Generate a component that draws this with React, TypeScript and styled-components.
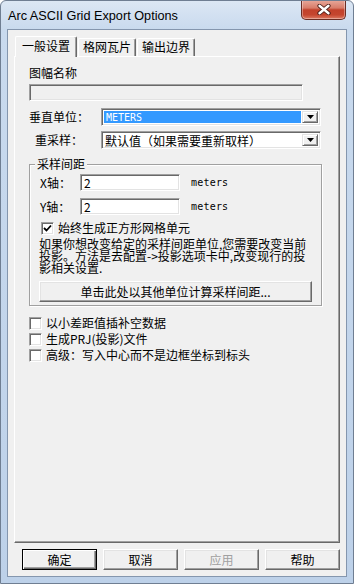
import React from 'react';
import styled, { createGlobalStyle } from 'styled-components';

const GlobalStyle = createGlobalStyle`
  html, body { margin: 0; padding: 0; background: #ffffff; }
  body { font-family: "Noto Sans CJK SC", "Liberation Sans", sans-serif; font-size: 12px; color: #000; }
  * { box-sizing: border-box; }
`;

const CJK = `"Noto Sans CJK SC", "Liberation Sans", sans-serif`;
const MONO = `"DejaVu Sans Mono", "Liberation Mono", monospace`;

const Window = styled.div`
  width: 354px;
  height: 584px;
  display: flex;
  flex-direction: column;
  border: 1px solid #6f7e92;
  border-radius: 6px 6px 0 0;
  background: linear-gradient(180deg, #dce7f4 0px, #c9daee 28px, #bdd1e9 100%);
  padding: 0 6px 6px;
  overflow: hidden;
`;

const TitleBar = styled.div`
  height: 28px;
  flex: none;
  display: flex;
  align-items: center;
  justify-content: space-between;
  padding-left: 1px;
`;

const Title = styled.div`
  font-family: "Liberation Sans", sans-serif;
  font-size: 12.7px;
  color: #000;
  margin-top: 1px;
`;

const CloseButton = styled.div`
  align-self: flex-start;
  margin-top: -1px;
  margin-right: 1px;
  width: 45px;
  height: 20px;
  display: flex;
  align-items: center;
  justify-content: center;
  border: 1px solid #6a2d24;
  border-top: none;
  border-radius: 0 0 5px 5px;
  background: linear-gradient(180deg, #e9aa9c 0%, #d87c69 42%, #c2412b 52%, #c5462f 78%, #dc7a63 100%);
  box-shadow: inset 0 0 0 1px rgba(255, 255, 255, 0.35);
`;

const Client = styled.div`
  flex: 1;
  display: flex;
  flex-direction: column;
  background: #f0f0f0;
  border: 1px solid #8496ae;
  padding: 6px 6px 6px 6px;
`;

const TabStrip = styled.div`
  height: 20px;
  flex: none;
  display: flex;
  align-items: flex-end;
  gap: 1px;
  padding-left: 1px;
  position: relative;
  z-index: 1;
`;

const Tab = styled.div<{ $active?: boolean }>`
  height: ${(p) => (p.$active ? 21 : 18)}px;
  margin-bottom: ${(p) => (p.$active ? -1 : 0)}px;
  padding: ${(p) => (p.$active ? '0 6px' : '0 4px')};
  line-height: ${(p) => (p.$active ? 18 : 16)}px;
  font-family: ${CJK};
  font-size: 12px;
  background: #f0f0f0;
  border-left: 1px solid #ffffff;
  border-top: 1px solid #ffffff;
  border-right: 1px solid #696969;
  box-shadow: inset -1px 0 0 #a0a0a0;
  border-radius: 2px 2px 0 0;
  white-space: nowrap;
`;

const Panel = styled.div`
  flex: 1;
  display: flex;
  flex-direction: column;
  border-top: 1px solid #ffffff;
  border-left: 1px solid #ffffff;
  border-right: 1px solid #696969;
  border-bottom: 1px solid #696969;
  box-shadow: inset -1px -1px 0 #a0a0a0;
  padding: 0 0 0 14px;
`;

const FieldLabel = styled.div`
  margin-top: 9px;
  height: 14px;
  line-height: 14px;
  font-family: ${CJK};
`;

const TextBox = styled.div<{ $w: number; $disabled?: boolean; $mt?: number }>`
  width: ${(p) => p.$w}px;
  height: 17px;
  margin-top: ${(p) => p.$mt ?? 0}px;
  flex: none;
  background: ${(p) => (p.$disabled ? '#f0f0f0' : '#ffffff')};
  border: 1px solid;
  border-color: #a0a0a0 #ffffff #ffffff #a0a0a0;
  box-shadow: inset 1px 1px 0 #696969, inset -1px -1px 0 #e3e3e3;
  padding: 0 3px;
  line-height: 15px;
  font-family: ${CJK};
  font-size: 12px;
`;

const ComboRow = styled.div<{ $mt: number }>`
  margin-top: ${(p) => p.$mt}px;
  display: flex;
  align-items: center;
  height: 18px;
`;

const RowLabel = styled.div<{ $w: number; $indent?: number }>`
  width: ${(p) => p.$w}px;
  padding-left: ${(p) => p.$indent ?? 0}px;
  flex: none;
  font-family: ${CJK};
  line-height: 14px;
  white-space: nowrap;
`;

const Combo = styled.div`
  width: 220px;
  height: 18px;
  display: flex;
  background: #ffffff;
  border: 1px solid;
  border-color: #a0a0a0 #ffffff #ffffff #a0a0a0;
  box-shadow: inset 1px 1px 0 #696969, inset -1px -1px 0 #e3e3e3;
  padding: 2px;
`;

const ComboValue = styled.div<{ $selected?: boolean; $mono?: boolean }>`
  flex: 1;
  margin-right: 1px;
  padding-left: ${(p) => (p.$selected ? 2 : 1)}px;
  background: ${(p) => (p.$selected ? '#3399ff' : 'transparent')};
  color: ${(p) => (p.$selected ? '#ffffff' : '#000000')};
  font-family: ${(p) => (p.$mono ? MONO : CJK)};
  font-size: ${(p) => (p.$mono ? 10 : 12)}px;
  line-height: 14px;
  white-space: nowrap;
`;

const DropButton = styled.div`
  width: 16px;
  flex: none;
  display: flex;
  align-items: center;
  justify-content: center;
  background: #f0f0f0;
  border: 1px solid;
  border-color: #e3e3e3 #696969 #696969 #e3e3e3;
  box-shadow: inset 1px 1px 0 #ffffff, inset -1px -1px 0 #a0a0a0;
`;

const Group = styled.fieldset`
  margin: 8px 0 0 0;
  width: 293px;
  padding: 0;
  border: 1px solid #a0a0a0;
  box-shadow: 1px 1px 0 #ffffff, inset 1px 1px 0 #ffffff;
  min-inline-size: 0;
`;

const Legend = styled.legend`
  margin-left: 5px;
  padding: 0 2px;
  line-height: 14px;
  height: 14px;
  font-family: ${CJK};
  background: #f0f0f0;
`;

const GroupBody = styled.div`
  display: flex;
  flex-direction: column;
  padding: 0 9px 3px 10px;
`;

const SpacingRow = styled.div<{ $mt: number }>`
  margin-top: ${(p) => p.$mt}px;
  display: flex;
  align-items: center;
  height: 17px;
`;

const Unit = styled.div`
  margin-left: 11px;
  font-family: ${MONO};
  font-size: 10px;
  letter-spacing: 0.2px;
  line-height: 14px;
`;

const CheckRow = styled.div<{ $mt?: number; $h: number; $ml?: number }>`
  margin-top: ${(p) => p.$mt ?? 0}px;
  margin-left: ${(p) => p.$ml ?? 0}px;
  height: ${(p) => p.$h}px;
  display: flex;
  align-items: center;
  gap: 4px;
  font-family: ${CJK};
  line-height: 14px;
  white-space: nowrap;
`;

const CheckBox = styled.div`
  width: 13px;
  height: 13px;
  flex: none;
  background: #ffffff;
  border: 1px solid;
  border-color: #a0a0a0 #ffffff #ffffff #a0a0a0;
  box-shadow: inset 1px 1px 0 #696969, inset -1px -1px 0 #e3e3e3;
  display: flex;
  align-items: center;
  justify-content: center;
`;

const Note = styled.div`
  margin-top: 3px;
  margin-left: -1px;
  font-family: ${CJK};
  font-size: 12px;
  line-height: 12px;
`;

const NoteLine = styled.div`
  white-space: nowrap;
  height: 12px;
`;

const PushButton = styled.div<{ $w: number; $default?: boolean; $disabled?: boolean }>`
  width: ${(p) => p.$w}px;
  height: 21px;
  flex: none;
  display: flex;
  align-items: center;
  justify-content: center;
  font-family: ${CJK};
  font-size: 12px;
  line-height: 14px;
  color: ${(p) => (p.$disabled ? '#a0a0a0' : '#000000')};
  background: #f0f0f0;
  border: 1px solid;
  border-color: ${(p) => (p.$default ? '#000000' : '#ffffff #696969 #696969 #ffffff')};
  box-shadow: ${(p) =>
    p.$default
      ? 'inset 1px 1px 0 #ffffff, inset -1px -1px 0 #696969, inset -2px -2px 0 #a0a0a0'
      : 'inset -1px -1px 0 #a0a0a0, inset 1px 1px 0 #e3e3e3'};
  white-space: nowrap;
`;

const WideButton = styled(PushButton)`
  margin-top: 7px;
  margin-left: -1px;
`;

const Options = styled.div`
  margin-top: 9px;
  display: flex;
  flex-direction: column;
`;

const ButtonRow = styled.div`
  margin-top: 6px;
  flex: none;
  display: flex;
  justify-content: flex-end;
  gap: 6px;
`;

const Arrow = () => (
  <svg width="7" height="4" viewBox="0 0 7 4">
    <polygon points="0,0 7,0 3.5,4" fill="#000" />
  </svg>
);

const Check = () => (
  <svg width="9" height="9" viewBox="0 0 9 9">
    <polyline points="1,4 3.5,6.5 8,1.5" fill="none" stroke="#000" strokeWidth="1.8" />
  </svg>
);

const CloseGlyph = () => (
  <svg width="14" height="11" viewBox="0 0 14 11">
    <path d="M2.5 1.8 L11.5 9.2 M11.5 1.8 L2.5 9.2" stroke="#4a1c16" strokeWidth="4.2" strokeLinecap="round" />
    <path d="M2.5 1.8 L11.5 9.2 M11.5 1.8 L2.5 9.2" stroke="#ffffff" strokeWidth="2.4" strokeLinecap="round" />
  </svg>
);

export default function App() {
  return (
    <>
      <GlobalStyle />
      <Window>
        <TitleBar>
          <Title>Arc ASCII Grid Export Options</Title>
          <CloseButton>
            <CloseGlyph />
          </CloseButton>
        </TitleBar>
        <Client>
          <TabStrip>
            <Tab $active>一般设置</Tab>
            <Tab>格网瓦片</Tab>
            <Tab>输出边界</Tab>
          </TabStrip>
          <Panel>
            <FieldLabel>图幅名称</FieldLabel>
            <TextBox $w={274} $disabled $mt={4} />
            <ComboRow $mt={7}>
              <RowLabel $w={72}>垂直单位：</RowLabel>
              <Combo>
                <ComboValue $selected $mono>METERS</ComboValue>
                <DropButton>
                  <Arrow />
                </DropButton>
              </Combo>
            </ComboRow>
            <ComboRow $mt={5}>
              <RowLabel $w={72} $indent={6}>重采样：</RowLabel>
              <Combo>
                <ComboValue>默认值（如果需要重新取样）</ComboValue>
                <DropButton>
                  <Arrow />
                </DropButton>
              </Combo>
            </ComboRow>
            <Group>
              <Legend>采样间距</Legend>
              <GroupBody>
                <SpacingRow $mt={3}>
                  <RowLabel $w={40}>X轴：</RowLabel>
                  <TextBox $w={100}>2</TextBox>
                  <Unit>meters</Unit>
                </SpacingRow>
                <SpacingRow $mt={7}>
                  <RowLabel $w={40}>Y轴：</RowLabel>
                  <TextBox $w={100}>2</TextBox>
                  <Unit>meters</Unit>
                </SpacingRow>
                <CheckRow $mt={6} $h={14} $ml={1}>
                  <CheckBox>
                    <Check />
                  </CheckBox>
                  始终生成正方形网格单元
                </CheckRow>
                <Note>
                  <NoteLine>如果你想改变给定的采样间距单位,您需要改变当前</NoteLine>
                  <NoteLine>投影。方法是去配置-&gt;投影选项卡中,改变现行的投</NoteLine>
                  <NoteLine>影相关设置.</NoteLine>
                </Note>
                <WideButton $w={273}>单击此处以其他单位计算采样间距...</WideButton>
              </GroupBody>
            </Group>
            <Options>
              <CheckRow $h={16}>
                <CheckBox />
                以小差距值插补空数据
              </CheckRow>
              <CheckRow $h={16}>
                <CheckBox />
                生成PRJ(投影)文件
              </CheckRow>
              <CheckRow $h={16}>
                <CheckBox />
                高级：写入中心而不是边框坐标到标头
              </CheckRow>
            </Options>
          </Panel>
          <ButtonRow>
            <PushButton $w={75} $default>确定</PushButton>
            <PushButton $w={75}>取消</PushButton>
            <PushButton $w={75} $disabled>应用</PushButton>
            <PushButton $w={75}>帮助</PushButton>
          </ButtonRow>
        </Client>
      </Window>
    </>
  );
}
